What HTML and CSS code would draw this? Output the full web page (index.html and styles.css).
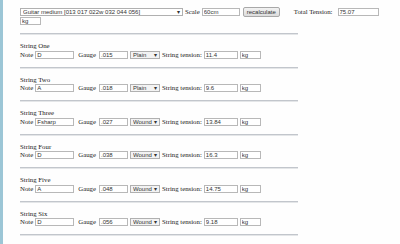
FILE: index.html
```html
<!DOCTYPE html>
<html lang="en">
<head>
  <meta charset="UTF-8">
  <title>String tension calculator</title>
  <link rel="stylesheet" href="styles.css">
</head>
<body>

<div class="page">
  <div class="top">
    <span class="pick wide">
      <select class="main">
        <option>Guitar medium [013 017 022w 032 044 056]</option>
      </select>
    </span>
    <span class="lbl scale-lbl">Scale</span>
    <input class="scale" type="text" value="60cm">
    <button class="recalc">recalculate</button>
    <span class="lbl total-lbl">Total Tension:</span>
    <input class="total" type="text" value="75.07">
  </div>
  <div class="unit-row">
    <input class="kg" type="text" value="kg">
  </div>
  <hr>

  <div class="string">
    <div class="name">String One</div>
    <div class="row">
      <span class="lbl">Note</span>
      <input class="note" type="text" value="D">
      <span class="lbl gauge-lbl">Gauge</span>
      <input class="gauge" type="text" value=".015">
      <span class="pick"><select class="kind"><option>Plain</option></select></span>
      <span class="lbl">String tension:</span>
      <input class="tension" type="text" value="11.4">
      <input class="kg" type="text" value="kg">
    </div>
    <hr>
  </div>

  <div class="string">
    <div class="name">String Two</div>
    <div class="row">
      <span class="lbl">Note</span>
      <input class="note" type="text" value="A">
      <span class="lbl gauge-lbl">Gauge</span>
      <input class="gauge" type="text" value=".018">
      <span class="pick"><select class="kind"><option>Plain</option></select></span>
      <span class="lbl">String tension:</span>
      <input class="tension" type="text" value="9.6">
      <input class="kg" type="text" value="kg">
    </div>
    <hr>
  </div>

  <div class="string">
    <div class="name">String Three</div>
    <div class="row">
      <span class="lbl">Note</span>
      <input class="note" type="text" value="Fsharp">
      <span class="lbl gauge-lbl">Gauge</span>
      <input class="gauge" type="text" value=".027">
      <span class="pick"><select class="kind"><option>Wound</option></select></span>
      <span class="lbl">String tension:</span>
      <input class="tension" type="text" value="13.84">
      <input class="kg" type="text" value="kg">
    </div>
    <hr>
  </div>

  <div class="string">
    <div class="name">String Four</div>
    <div class="row">
      <span class="lbl">Note</span>
      <input class="note" type="text" value="D">
      <span class="lbl gauge-lbl">Gauge</span>
      <input class="gauge" type="text" value=".038">
      <span class="pick"><select class="kind"><option>Wound</option></select></span>
      <span class="lbl">String tension:</span>
      <input class="tension" type="text" value="16.3">
      <input class="kg" type="text" value="kg">
    </div>
    <hr>
  </div>

  <div class="string">
    <div class="name">String Five</div>
    <div class="row">
      <span class="lbl">Note</span>
      <input class="note" type="text" value="A">
      <span class="lbl gauge-lbl">Gauge</span>
      <input class="gauge" type="text" value=".048">
      <span class="pick"><select class="kind"><option>Wound</option></select></span>
      <span class="lbl">String tension:</span>
      <input class="tension" type="text" value="14.75">
      <input class="kg" type="text" value="kg">
    </div>
    <hr>
  </div>

  <div class="string">
    <div class="name">String Six</div>
    <div class="row">
      <span class="lbl">Note</span>
      <input class="note" type="text" value="D">
      <span class="lbl gauge-lbl">Gauge</span>
      <input class="gauge" type="text" value=".056">
      <span class="pick"><select class="kind"><option>Wound</option></select></span>
      <span class="lbl">String tension:</span>
      <input class="tension" type="text" value="9.18">
      <input class="kg" type="text" value="kg">
    </div>
    <hr>
  </div>
</div>

</body>
</html>
```

FILE: styles.css
```css
html, body {
  margin: 0;
  padding: 0;
  background: #fefefe;
}

body {
  border-left: 3px solid #9cc6d6;
  min-height: 244px;
  box-sizing: border-box;
  font-family: "Liberation Serif", "Times New Roman", serif;
  font-size: 6.8px;
  color: #222;
}

.page {
  padding: 7px 0 0 17px;
}

.top {
  display: flex;
  align-items: center;
  height: 10px;
}

.unit-row {
  display: flex;
  align-items: center;
  height: 8px;
}

.row {
  display: flex;
  align-items: center;
  height: 9px;
}

.name {
  height: 8px;
  line-height: 8px;
}

.lbl {
  white-space: nowrap;
  line-height: 8px;
}

input, select, button {
  font-family: "Liberation Sans", Arial, sans-serif;
  font-size: 6px;
  color: #333;
  box-sizing: border-box;
  margin: 0;
}

input {
  height: 8px;
  border: 1px solid #b8b8b8;
  padding: 0 1px;
  background: #fff;
}

.pick {
  position: relative;
  display: inline-block;
  height: 8px;
}

.pick::after {
  content: "\25BE";
  position: absolute;
  right: 3px;
  top: 0;
  font-family: "DejaVu Sans", sans-serif;
  font-size: 6px;
  line-height: 8px;
  color: #333;
  pointer-events: none;
}

select {
  appearance: none;
  -webkit-appearance: none;
  height: 8px;
  border: 1px solid #b0b0b0;
  padding: 0 0 0 2px;
  line-height: 6px;
  border-radius: 0;
}

select.main {
  width: 163px;
  background: #fff;
}

select.kind {
  width: 30px;
  background: #f3f3f3;
}

.wide { margin-right: 2px; }
.scale-lbl { margin-right: 2px; }
.scale { width: 38px; margin-right: 3px; }

.recalc {
  width: 37px;
  height: 10px;
  padding: 0;
  border: 1px solid #a8a8a8;
  border-radius: 2px;
  background: linear-gradient(#f2f2f2, #dcdcdc);
  line-height: 8px;
}

.total-lbl { margin-left: 14px; margin-right: 5px; }
.total { width: 41px; }

.kg { width: 21px; }

.note { width: 39px; margin-left: 2px; margin-right: 4px; }
.gauge-lbl { margin-right: 3px; }
.gauge { width: 29px; margin-right: 2px; }
.row .pick { margin-right: 2px; }
.tension { width: 34px; margin-left: 2px; margin-right: 2px; }

hr {
  width: 278px;
  height: 0;
  margin: 7.5px 0 7px 0;
  border: none;
  border-top: 1px solid #c2c6cc;
  border-bottom: 1px solid #e4e6e8;
}

.unit-row + hr {
  margin-top: 8px;
}
```
